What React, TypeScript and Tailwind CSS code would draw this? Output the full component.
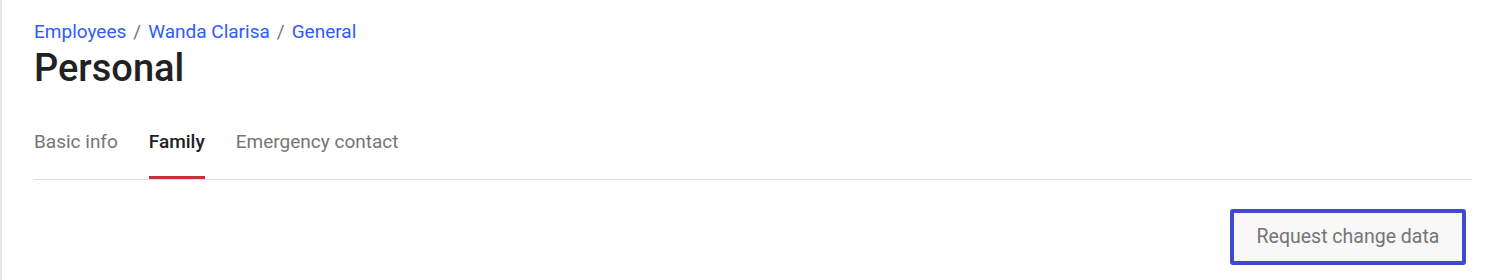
import React from "react";

export default function App() {
  const tabs = [
    { label: "Basic info", active: false },
    { label: "Family", active: true },
    { label: "Emergency contact", active: false },
  ];
  return (
    <div
      className="min-h-[280px] w-full bg-white border-l-2 border-[#e6e6e6] pl-[32px] pr-[16px] pt-[19px]"
      style={{ fontFamily: "Roboto, 'Noto Sans', sans-serif" }}
    >
      <nav className="flex items-center text-[19px] leading-[25px]">
        <a className="text-[#2e5bff]">Employees</a>
        <span className="mx-[7px] text-[#757575]">/</span>
        <a className="text-[#2e5bff]">Wanda Clarisa</a>
        <span className="mx-[7px] text-[#757575]">/</span>
        <a className="text-[#2e5bff]">General</a>
      </nav>
      <h1 className="text-[38px] leading-[48px] font-medium text-[#212121]">Personal</h1>
      <div className="mt-[38px] flex gap-[31px] border-b border-[#e0e0e0]">
        {tabs.map((t) => (
          <div
            key={t.label}
            className={
              t.active
                ? "text-[19px] leading-[24px] pb-[22px] border-b-[3px] border-[#c62f3c] text-[#212121] font-medium"
                : "text-[19px] leading-[24px] pb-[22px] border-b-[3px] border-transparent text-[#757575]"
            }
          >
            {t.label}
          </div>
        ))}
      </div>
      <div className="flex justify-end mt-[29px] mr-[6px]">
        <button className="h-[56px] w-[236px] border-4 border-[#4148d1] rounded-[3px] bg-[#f8f8f8] text-[19.5px] text-[#757575] flex items-center justify-center">
          Request change data
        </button>
      </div>
    </div>
  );
}
